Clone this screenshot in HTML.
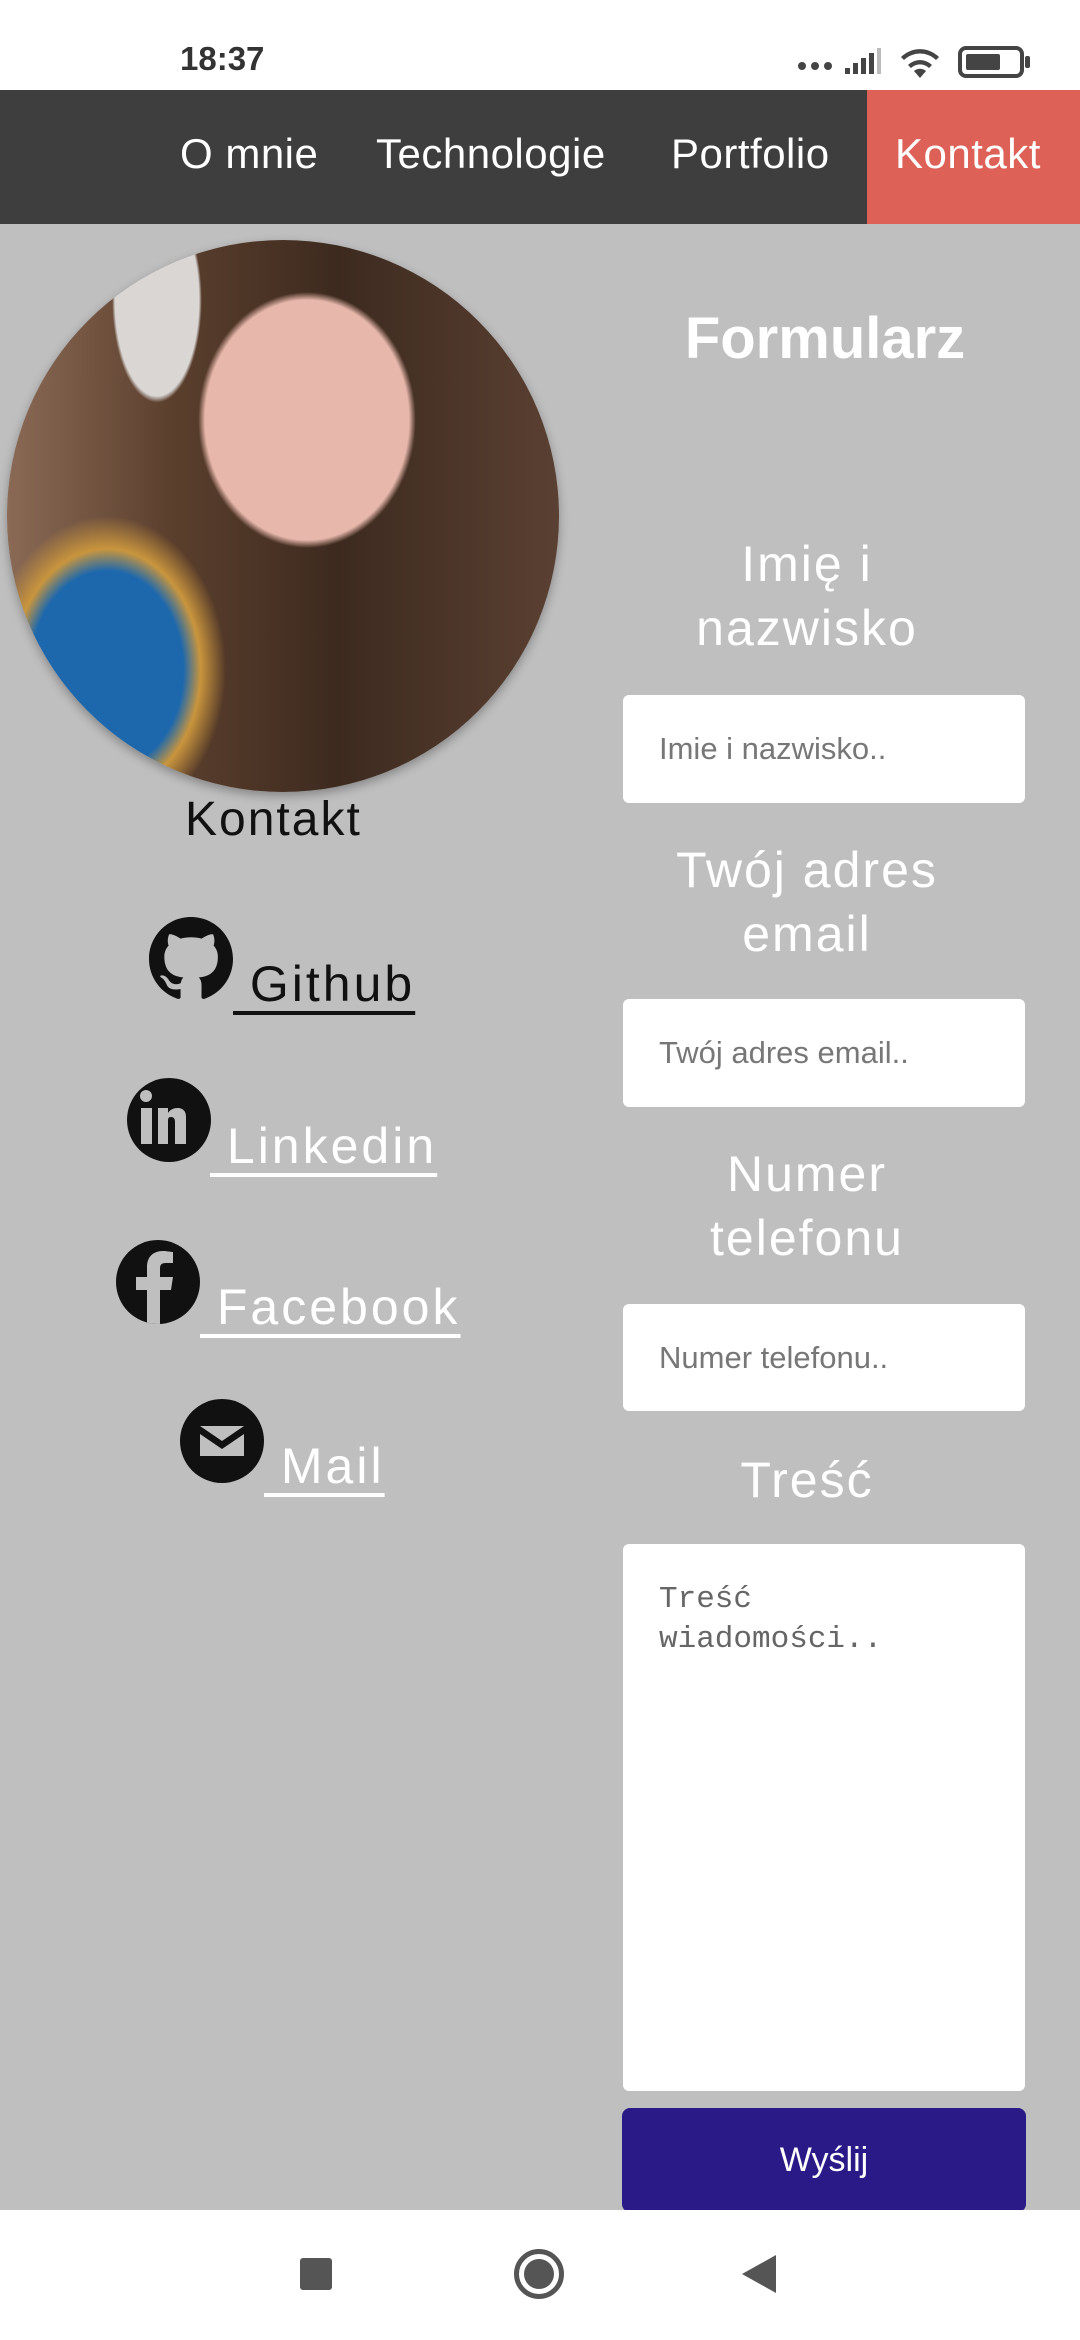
<!DOCTYPE html>
<html><head><meta charset="utf-8"><style>
*{margin:0;padding:0;box-sizing:border-box}
body{width:1080px;height:2340px;background:#bfbfbf;position:relative;overflow:hidden;font-family:"Liberation Sans",sans-serif}
.abs{position:absolute}
.status{left:0;top:0;width:1080px;height:90px;background:#fff}
.nav{left:0;top:90px;width:1080px;height:134px;background:#3e3e3e}
.nav span{position:absolute;top:40px;font-size:42px;color:#fff;letter-spacing:0.5px}
.kon{left:867px;top:0;width:213px;height:134px;background:#dd6156}
.lbl{color:#fff;font-size:50px;text-align:center;width:420px;left:597px;line-height:64px;letter-spacing:2px}
.inp{left:623px;width:402px;background:#fff;border-radius:6px;font-size:31px;color:#777;padding-left:36px;display:flex;align-items:center}
.link{font-size:50px;text-decoration:underline;text-decoration-thickness:4px;text-underline-offset:10px;letter-spacing:3px}
.ic{border-radius:50%;background:#111}
</style></head><body>
<div class="abs status">
<div class="abs" style="left:180px;top:40px;font-size:33px;font-weight:bold;color:#333">18:37</div>
<div class="abs" style="left:798px;top:62px;width:8px;height:8px;border-radius:50%;background:#444;box-shadow:13px 0 #444,26px 0 #444"></div>
<svg class="abs" style="left:843px;top:48px" width="42" height="28"><path d="M2 26h5v-6h-5zM10 26h5v-11h-5zM18 26h5v-16h-5zM26 26h5v-21h-5z" fill="#444"/><rect x="34" y="0" width="4" height="26" fill="#bbb"/></svg>
<svg class="abs" style="left:898px;top:44px" width="44" height="36"><path d="M22 34l-6-7a9 9 0 0 1 12 0z M10 21a17 17 0 0 1 24 0l-3 3a13 13 0 0 0-18 0z M3 13a27 27 0 0 1 38 0l-3 3a23 23 0 0 0-32 0z" fill="#444"/></svg>
<div class="abs" style="left:958px;top:46px;width:66px;height:32px;border:4px solid #444;border-radius:8px"><div style="margin:4px;width:34px;height:16px;background:#444;border-radius:2px"></div></div>
<div class="abs" style="left:1025px;top:56px;width:5px;height:12px;background:#444;border-radius:2px"></div>
</div>
<div class="abs nav">
<div class="abs kon"></div>
<span style="left:180px">O mnie</span>
<span style="left:376px">Technologie</span>
<span style="left:671px">Portfolio</span>
<span style="left:895px">Kontakt</span>
</div>
<div class="abs" style="left:7px;top:240px;width:552px;height:552px;border-radius:50%;overflow:hidden;box-shadow:0 4px 10px rgba(0,0,0,.3);background:
radial-gradient(ellipse 170px 200px at 300px 180px,#e7b7ab 60%,transparent 64%),
radial-gradient(ellipse 70px 160px at 150px 60px,#d9d6d4 60%,transparent 64%),
radial-gradient(ellipse 170px 220px at 100px 430px,#1d68ad 45%,#c9953d 55%,transparent 70%),
linear-gradient(90deg,#8a6a55 0%,#5b3f2d 30%,#3d2a1f 60%,#5a4032 100%)"></div>
<div class="abs" style="left:185px;top:792px;font-size:48px;color:#111;letter-spacing:2px">Kontakt</div>
<svg class="abs" style="left:149px;top:917px" width="84" height="84" viewBox="0 0 16 16"><path fill="#111" d="M8 0C3.58 0 0 3.58 0 8c0 3.54 2.290 6.53 5.47 7.59.4.07.55-.17.55-.38 0-.19-.01-.82-.01-1.49-2.01.37-2.53-.49-2.69-.94-.09-.23-.48-.94-.82-1.130-.28-.15-.68-.52-.01-.53.63-.01 1.08.58 1.23.82.72 1.21 1.87.87 2.33.66.07-.52.28-.87.51-1.07-1.78-.2-3.64-.89-3.64-3.95 0-.87.31-1.59.82-2.15-.08-.2-.36-1.02.08-2.12 0 0 .67-.21 2.2.82.64-.18 1.32-.27 2-.27.68 0 1.36.09 2 .27 1.53-1.04 2.2-.82 2.2-.82.44 1.1.16 1.92.08 2.12.51.56.82 1.27.82 2.15 0 3.07-1.87 3.75-3.65 3.95.29.25.54.73.54 1.48 0 1.07-.01 1.930-.01 2.2 0 .21.15.46.55.38A8.013 8.013 0 0016 8c0-4.42-3.58-8-8-8z"/></svg>
<div class="abs link" style="left:233px;top:955px;color:#111">&nbsp;Github</div>
<div class="abs ic" style="left:127px;top:1078px;width:84px;height:84px"></div>
<div class="abs" style="left:140px;top:1090px;width:12px;height:12px;border-radius:50%;background:#bfbfbf"></div>
<div class="abs" style="left:141px;top:1108px;width:11px;height:36px;background:#bfbfbf"></div>
<svg class="abs" style="left:158px;top:1106px" width="40" height="40"><path d="M0 2h10v5c3-5 10-6 14-4 4 2 4 6 4 10v25h-11v-22c0-3-1-5-4-5s-3 2-3 5v22h-10z" fill="#bfbfbf"/></svg>
<div class="abs link" style="left:210px;top:1117px;color:#fff">&nbsp;Linkedin</div>
<div class="abs ic" style="left:116px;top:1240px;width:84px;height:84px;overflow:hidden"><svg width="84" height="84"><path d="M44 84V50h11l2-13H44v-8c0-4 1-6 6-6h7V12c-2 0-6-1-10-1-10 0-16 6-16 16v10H20v13h11v34z" fill="#bfbfbf"/></svg></div>
<div class="abs link" style="left:200px;top:1278px;color:#fff">&nbsp;Facebook</div>
<div class="abs ic" style="left:180px;top:1399px;width:84px;height:84px"><svg width="84" height="84"><path d="M20 27h44v30h-44z" fill="#bfbfbf"/><path d="M20 27l22 15 22-15v8l-22 15-22-15z" fill="#111"/></svg></div>
<div class="abs link" style="left:264px;top:1437px;color:#fff">&nbsp;Mail</div>
<div class="abs" style="left:597px;top:305px;width:456px;text-align:center;font-size:58px;font-weight:bold;color:#fff">Formularz</div>
<div class="abs lbl" style="top:532px">Imię i<br>nazwisko</div>
<div class="abs inp" style="top:695px;height:108px">Imie i nazwisko..</div>
<div class="abs lbl" style="top:838px">Twój adres<br>email</div>
<div class="abs inp" style="top:999px;height:108px">Twój adres email..</div>
<div class="abs lbl" style="top:1142px">Numer<br>telefonu</div>
<div class="abs inp" style="top:1304px;height:107px">Numer telefonu..</div>
<div class="abs lbl" style="top:1448px">Treść</div>
<div class="abs" style="left:623px;top:1544px;width:402px;height:547px;background:#fff;border-radius:6px;font-family:'Liberation Mono',monospace;font-size:31px;color:#666;padding:36px 36px;line-height:40px">Treść<br>wiadomości..</div>
<div class="abs" style="left:622px;top:2108px;width:404px;height:104px;background:#2a1a87;border-radius:8px;color:#fff;font-size:34px;text-align:center;line-height:104px">Wyślij</div>
<div class="abs" style="left:0;top:2210px;width:1080px;height:130px;background:#fff">
<div class="abs" style="left:300px;top:48px;width:32px;height:32px;background:#555;border-radius:3px"></div>
<div class="abs" style="left:514px;top:39px;width:50px;height:50px;border:5px solid #555;border-radius:50%"><div style="margin:5px;width:30px;height:30px;border-radius:50%;background:#555"></div></div>
<svg class="abs" style="left:742px;top:45px" width="36" height="38"><path d="M34 0v38L0 19z" fill="#555"/></svg>
</div>
</body></html>
